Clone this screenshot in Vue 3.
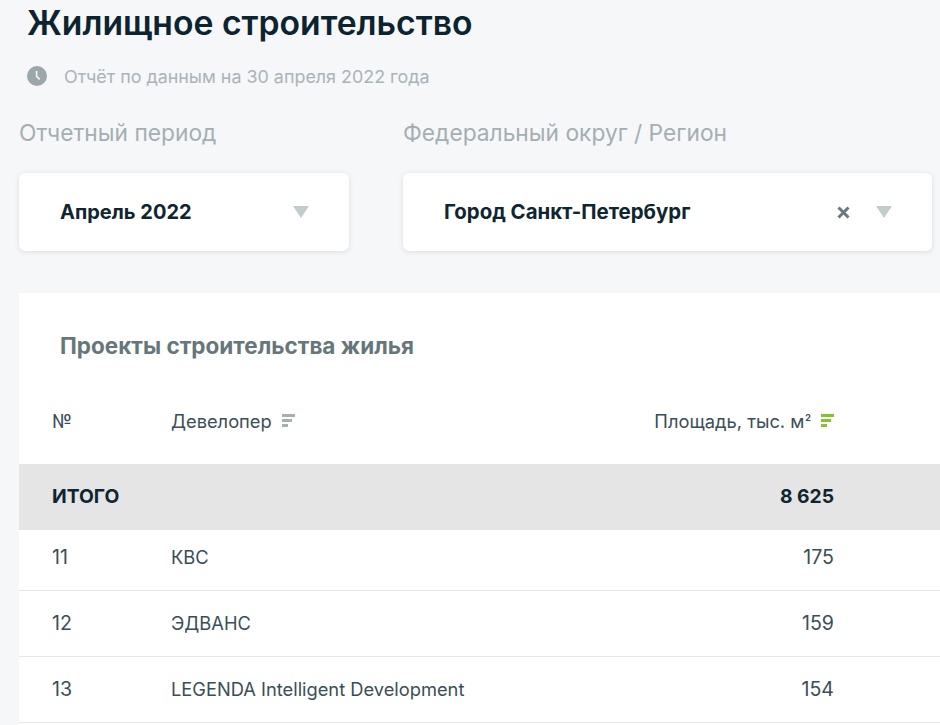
<script setup>
const rows = [
  { n: 11, name: 'КВС', area: '175' },
  { n: 12, name: 'ЭДВАНС', area: '159' },
  { n: 13, name: 'LEGENDA Intelligent Development', area: '154' }
]
</script>

<template>
  <div class="page">
    <h1 class="title">Жилищное строительство</h1>
    <div class="updated">
      <svg class="clock" width="20" height="20" viewBox="0 0 20 20">
        <circle cx="10" cy="10" r="10" fill="#9aa7ab" />
        <path d="M9.6 5v5.4l3.2 3" fill="none" stroke="#f6f7f9" stroke-width="1.6" />
      </svg>
      <span>Отчёт по данным на 30 апреля 2022 года</span>
    </div>
    <div class="filters">
      <div class="filter first">
        <div class="label">Отчетный период</div>
        <div class="select">
          <span class="value narrow">Апрель 2022</span>
          <span class="arrow"></span>
        </div>
      </div>
      <div class="filter second">
        <div class="label">Федеральный округ / Регион</div>
        <div class="select">
          <span class="value">Город Санкт-Петербург</span>
          <svg class="clear" width="15" height="15" viewBox="0 0 15 15">
            <path d="M2.5 2.5l10 10M12.5 2.5l-10 10" stroke="#66797f" stroke-width="3" fill="none" />
          </svg>
          <span class="arrow"></span>
        </div>
      </div>
    </div>
    <section class="card">
      <h2 class="card-title">Проекты строительства жилья</h2>
      <div class="row head">
        <div class="c-n">№</div>
        <div class="c-name">
          Девелопер
          <span class="sort">
            <i class="b1"></i><i class="b2"></i><i class="b3"></i>
          </span>
        </div>
        <div class="c-area">
          <span>Площадь, тыс. м<sup>2</sup></span>
          <span class="sort green">
            <i class="b1"></i><i class="b2"></i><i class="b3"></i>
          </span>
        </div>
      </div>
      <div class="row total">
        <div class="c-n">ИТОГО</div>
        <div class="c-name"></div>
        <div class="c-area">8 625</div>
      </div>
      <div v-for="r in rows" :key="r.n" class="row item">
        <div class="c-n num">{{ r.n }}</div>
        <div class="c-name">{{ r.name }}</div>
        <div class="c-area num">{{ r.area }}</div>
      </div>
    </section>
  </div>
</template>

<style>
html, body { margin: 0; background: #f6f7f9; }
</style>

<style scoped>
.page {
  width: 940px;
  height: 725px;
  overflow: hidden;
  box-sizing: border-box;
  padding: 3px 0 0 18px;
  background: #f6f7f9;
  font-family: Inter, "Noto Sans", sans-serif;
  color: #0e2630;
}
.title {
  margin: 0 0 0 9px;
  font-size: 33.7px;
  line-height: 40px;
  font-weight: 600;
  color: #0c2430;
}
.updated {
  display: flex;
  align-items: center;
  margin: 13px 0 0 9px;
  height: 40px;
  font-size: 17.9px;
  color: #a9b4b8;
}
.clock { margin-right: 17px; }
.filters {
  display: flex;
  margin: 23px 0 0 1px;
}
.filter.first { width: 330px; margin-right: 54px; }
.filter.second { width: 529px; }
.label {
  font-size: 22.75px;
  line-height: 28px;
  color: #a4afb3;
}
.select {
  display: flex;
  align-items: center;
  height: 78px;
  margin-top: 26px;
  padding: 0 40px 0 41px;
  box-sizing: border-box;
  background: #fff;
  border-radius: 6px;
  box-shadow: 0 1px 5px rgba(40, 60, 70, 0.14);
}
.value {
  flex: 1;
  font-size: 20.4px;
  line-height: 24px;
  font-weight: 700;
  color: #0f2530;
}
.value.narrow { font-size: 20px; }
.arrow {
  width: 0;
  height: 0;
  border-left: 8.5px solid transparent;
  border-right: 8.5px solid transparent;
  border-top: 12px solid #c3cccd;
}
.clear { margin-right: 25px; }
.card {
  margin: 42px 0 0 1px;
  width: 939px;
  height: 440px;
  background: #fff;
}
.card-title {
  margin: 0;
  padding: 38px 0 0 41px;
  font-size: 22.5px;
  line-height: 30px;
  font-weight: 700;
  color: #66767b;
}
.row {
  display: flex;
  align-items: center;
  padding-left: 33px;
  font-size: 18.3px;
  color: #3a4e57;
}
.num { font-size: 19.6px; }
.c-n { width: 119px; flex: none; }
.c-name { width: 300px; flex: none; display: flex; align-items: center; }
.c-area {
  width: 363px;
  flex: none;
  display: flex;
  justify-content: flex-end;
  align-items: center;
}
.head {
  height: 103px;
  padding-top: 16px;
  box-sizing: border-box;
}
.head sup { font-size: 9px; font-weight: 700; line-height: 0; vertical-align: 7px; margin-left: 1px; }
.sort {
  display: inline-flex;
  flex-direction: column;
  gap: 2px;
  margin-left: 10px;
}
.sort i { display: block; height: 3px; background: #a5b0b3; }
.sort .b1 { width: 13px; }
.sort .b2 { width: 10px; }
.sort .b3 { width: 6px; }
.sort.green i { background: #83c32e; }
.total {
  height: 66px;
  padding-bottom: 2px;
  box-sizing: border-box;
  background: #e5e5e5;
  font-weight: 700;
  font-size: 19.3px;
  color: #0f2530;
}
.item { height: 66px; padding-bottom: 2px; border-bottom: 1px solid #e6e8e9; box-sizing: border-box; }
.total + .item { height: 61px; padding-bottom: 7px; }
</style>
